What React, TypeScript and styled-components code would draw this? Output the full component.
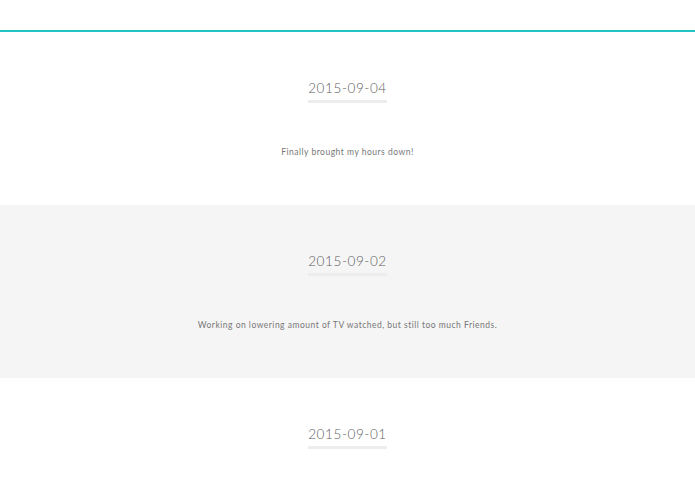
import styled, { createGlobalStyle } from 'styled-components';

const Global = createGlobalStyle`
  body {
    margin: 0;
    background-color: #ffffff;
    font-family: Lato, "Open Sans", sans-serif;
  }
`;
const Header = styled.div`
  height: 30px;
  border-bottom: 2px solid #22c3c5;
  background-color: #ffffff;
`;
const Entry = styled.section<{ $shaded?: boolean }>`
  height: 173px;
  background-color: ${(props) => (props.$shaded ? '#f5f5f5' : '#ffffff')};
  display: flex;
  flex-direction: column;
  align-items: center;
  padding-top: 47px;
  box-sizing: border-box;
`;
const DateLabel = styled.h2`
  margin: 0;
  font-size: 13.5px;
  font-weight: 300;
  line-height: 18px;
  letter-spacing: 0.6px;
  color: #5e5e5e;
  padding: 0 0 3px;
  border-bottom: 3px solid #ededed;
`;
const Note = styled.p`
  margin: 42px 0 0;
  font-size: 8.5px;
  line-height: 14px;
  letter-spacing: 0.5px;
  color: #777777;
`;

const entries = [
  { date: '2015-09-04', note: 'Finally brought my hours down!' },
  { date: '2015-09-02', note: 'Working on lowering amount of TV watched, but still too much Friends.' },
  { date: '2015-09-01', note: '' },
];

export default function App() {
  return (
    <>
      <Global />
      <Header />
      {entries.map((e, i) => (
        <Entry key={e.date} $shaded={i % 2 === 1}>
          <DateLabel>{e.date}</DateLabel>
          {e.note && <Note>{e.note}</Note>}
        </Entry>
      ))}
    </>
  );
}
